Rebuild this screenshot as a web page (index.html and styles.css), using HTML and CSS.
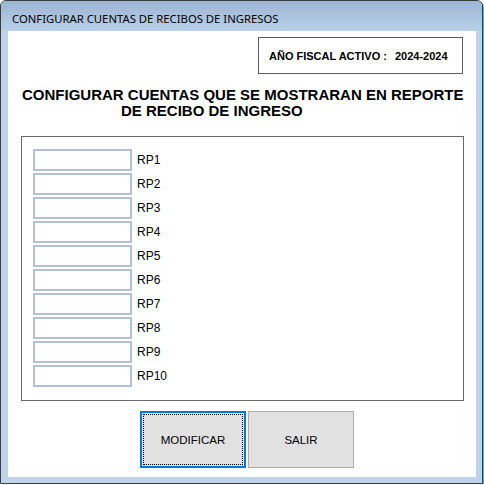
FILE: index.html
```html
<!DOCTYPE html>
<html>
<head>
<meta charset="utf-8">
<link rel="stylesheet" href="styles.css">
</head>
<body>
<div class="window">
  <div class="titlebar">CONFIGURAR CUENTAS DE RECIBOS DE INGRESOS</div>
  <div class="content">
    <div class="fiscal-row">
      <div class="fiscal-box">
        <span class="fiscal-label">AÑO FISCAL ACTIVO :</span>
        <span class="fiscal-value">2024-2024</span>
      </div>
    </div>
    <div class="heading">
      <div class="h-line1">CONFIGURAR CUENTAS QUE SE MOSTRARAN EN REPORTE</div>
      <div class="h-line2">DE RECIBO DE INGRESO</div>
    </div>
    <div class="groupbox">
      <div class="row"><input class="tb" type="text"><span class="lbl">RP1</span></div>
      <div class="row"><input class="tb" type="text"><span class="lbl">RP2</span></div>
      <div class="row"><input class="tb" type="text"><span class="lbl">RP3</span></div>
      <div class="row"><input class="tb" type="text"><span class="lbl">RP4</span></div>
      <div class="row"><input class="tb" type="text"><span class="lbl">RP5</span></div>
      <div class="row"><input class="tb" type="text"><span class="lbl">RP6</span></div>
      <div class="row"><input class="tb" type="text"><span class="lbl">RP7</span></div>
      <div class="row"><input class="tb" type="text"><span class="lbl">RP8</span></div>
      <div class="row"><input class="tb" type="text"><span class="lbl">RP9</span></div>
      <div class="row"><input class="tb" type="text"><span class="lbl">RP10</span></div>
    </div>
    <div class="buttons">
      <button class="btn btn-focus"><span class="focus-rect">MODIFICAR</span></button>
      <button class="btn">SALIR</button>
    </div>
  </div>
</div>
</body>
</html>
```

FILE: styles.css
```css
html, body {
  margin: 0;
  padding: 0;
  background: #ffffff;
}
.window {
  box-sizing: border-box;
  width: 483px;
  height: 484px;
  border: 1px solid #3c3c3c;
  border-radius: 6px 6px 0 0;
  box-shadow: 1px 1px 0 #27c3e3;
  background: #bfd4ea;
  padding: 0 6px 6px 7px;
  display: flex;
  flex-direction: column;
}
.titlebar {
  height: 30px;
  margin: 0 -6px 0 -7px;
  padding-left: 11px;
  border-radius: 5px 5px 0 0;
  background: linear-gradient(#9cb5d2, #b9d0e9);
  font-family: "Noto Sans", "Open Sans", sans-serif;
  font-size: 11.3px;
  line-height: 36px;
  color: #000;
  white-space: nowrap;
  overflow: hidden;
}
.content {
  flex: 1;
  background: #ffffff;
  display: flex;
  flex-direction: column;
  font-family: "Liberation Sans", Arial, sans-serif;
  color: #000;
}
.fiscal-row {
  display: flex;
  justify-content: flex-end;
  margin-top: 6px;
  padding-right: 13px;
}
.fiscal-box {
  box-sizing: border-box;
  width: 205px;
  height: 37px;
  border: 1px solid #5a5a5a;
  display: flex;
  align-items: center;
  padding-left: 10px;
  font-weight: bold;
  font-size: 11px;
}
.fiscal-value {
  margin-left: 8px;
}
.heading {
  margin-top: 13px;
  font-weight: bold;
  font-size: 15px;
  line-height: 16px;
  white-space: nowrap;
}
.h-line1 {
  padding-left: 14px;
}
.h-line2 {
  padding-left: 113px;
}
.groupbox {
  box-sizing: border-box;
  margin-top: 17px;
  margin-left: 13px;
  width: 443px;
  height: 265px;
  border: 1px solid #6a6a6a;
  padding: 12px 0 0 11px;
  display: flex;
  flex-direction: column;
  gap: 2px;
}
.row {
  display: flex;
  align-items: center;
  height: 22px;
}
.tb {
  box-sizing: border-box;
  width: 99px;
  height: 22px;
  margin: 0;
  border: 2px solid #b3c2d3;
  background: #fff;
  outline: none;
}
.lbl {
  margin-left: 5px;
  font-size: 12px;
}
.buttons {
  margin-top: 10px;
  margin-left: 132px;
  display: flex;
  gap: 2px;
}
.btn {
  box-sizing: border-box;
  width: 106px;
  height: 57px;
  margin: 0;
  padding: 0;
  background: #e1e1e1;
  border: 1px solid #adadad;
  font-family: "Liberation Sans", Arial, sans-serif;
  font-size: 11.5px;
  color: #000;
  display: flex;
  align-items: center;
  justify-content: center;
}
.btn-focus {
  border: 2px solid #0078d7;
  padding: 1px;
}
.focus-rect {
  box-sizing: border-box;
  width: 100%;
  height: 100%;
  border: 1px dotted #000;
  display: flex;
  align-items: center;
  justify-content: center;
}
```
